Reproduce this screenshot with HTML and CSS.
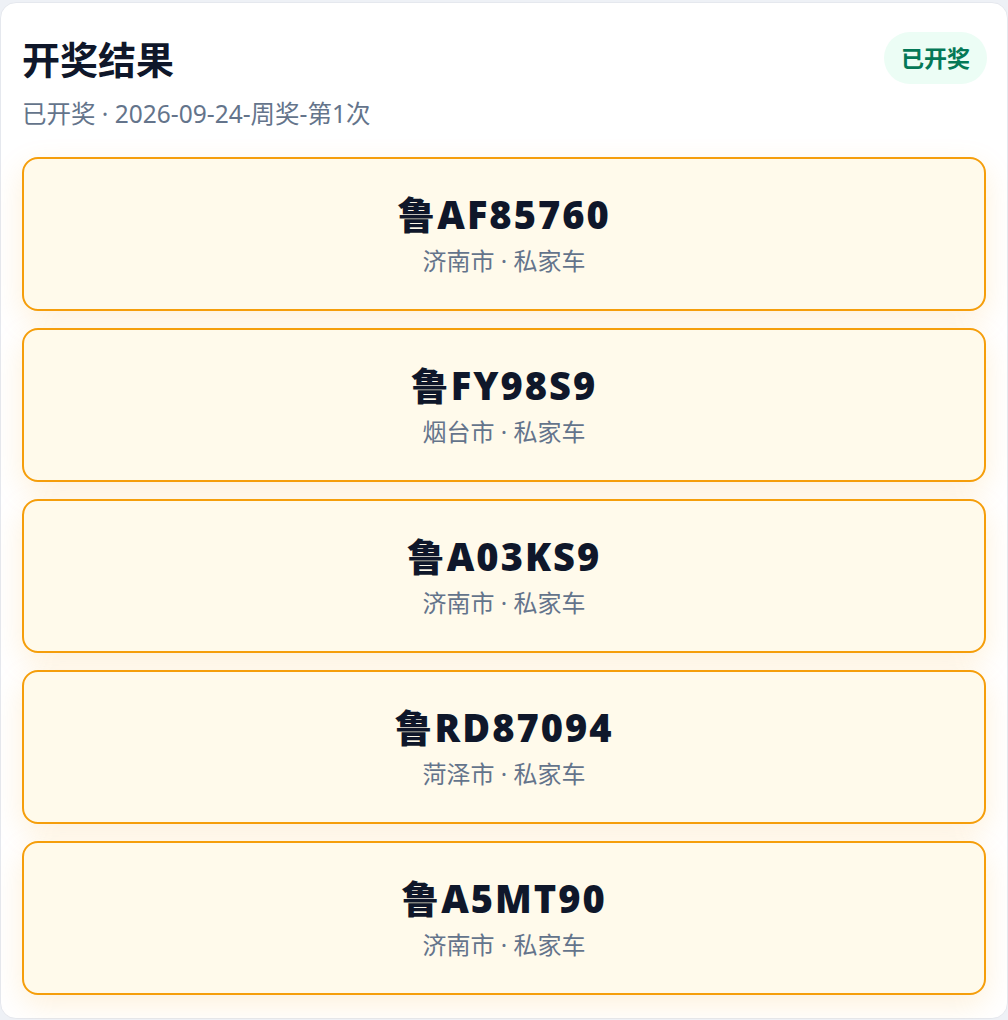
FILE: index.html
```html
<!DOCTYPE html>
<html lang="zh-CN">
<head>
    <meta charset="UTF-8">
    <meta name="viewport" content="width=device-width, initial-scale=1.0">
    <title>开奖结果</title>
    <link rel="stylesheet" href="styles.css">
</head>
<body>
    <div class="panel">
        <div class="panel-head">
            <div class="head-text">
                <h1>开奖结果</h1>
                <p class="meta">已开奖 · 2026-09-24-周奖-第1次</p>
            </div>
            <span class="badge">已开奖</span>
        </div>
        <div class="plates">
            <div class="plate">
                <div class="plate-no">鲁AF85760</div>
                <div class="plate-info">济南市 · 私家车</div>
            </div>
            <div class="plate">
                <div class="plate-no">鲁FY98S9</div>
                <div class="plate-info">烟台市 · 私家车</div>
            </div>
            <div class="plate">
                <div class="plate-no">鲁A03KS9</div>
                <div class="plate-info">济南市 · 私家车</div>
            </div>
            <div class="plate">
                <div class="plate-no">鲁RD87094</div>
                <div class="plate-info">菏泽市 · 私家车</div>
            </div>
            <div class="plate">
                <div class="plate-no">鲁A5MT90</div>
                <div class="plate-info">济南市 · 私家车</div>
            </div>
        </div>
    </div>
</body>
</html>
```

FILE: styles.css
```css
body {
    margin: 0;
    background-color: #eef1f6;
    font-family: 'Noto Sans', 'Noto Sans CJK SC', sans-serif;
    color: #0f172a;
    overflow: hidden;
}

.panel {
    margin-top: 2px;
    background-color: #ffffff;
    border: 1px solid #e5e8ee;
    border-radius: 16px;
    padding: 29px 21px 23px;
}

.panel-head {
    display: flex;
    justify-content: space-between;
    align-items: flex-start;
}

.panel-head h1 {
    margin: 5px 0 0;
    font-size: 38px;
    line-height: 1.2;
    font-weight: 700;
    color: #0f172a;
}

.meta {
    margin: 14px 0 0;
    font-size: 24.5px;
    line-height: 1.4;
    color: #64748b;
}

.badge {
    margin-right: -1px;
    padding: 0 17px;
    height: 52px;
    line-height: 52px;
    border-radius: 26px;
    background-color: #ecfdf5;
    color: #047857;
    font-size: 23px;
    font-weight: 700;
}

.plates {
    display: flex;
    flex-direction: column;
    gap: 17px;
    margin-top: 26px;
}

.plate {
    background-color: #fffaeb;
    border: 2px solid #f59e0b;
    border-radius: 16px;
    padding: 34px 20px 31px;
    text-align: center;
    box-shadow: 0 10px 30px rgba(245, 158, 11, 0.15);
}

.plate-no {
    font-family: 'Open Sans', 'Noto Sans CJK SC', sans-serif;
    font-size: 38px;
    line-height: 42px;
    font-weight: 800;
    letter-spacing: 2px;
    color: #0f172a;
}

.plate-info {
    margin-top: 9px;
    font-size: 24px;
    line-height: 34px;
    color: #64748b;
}
```
